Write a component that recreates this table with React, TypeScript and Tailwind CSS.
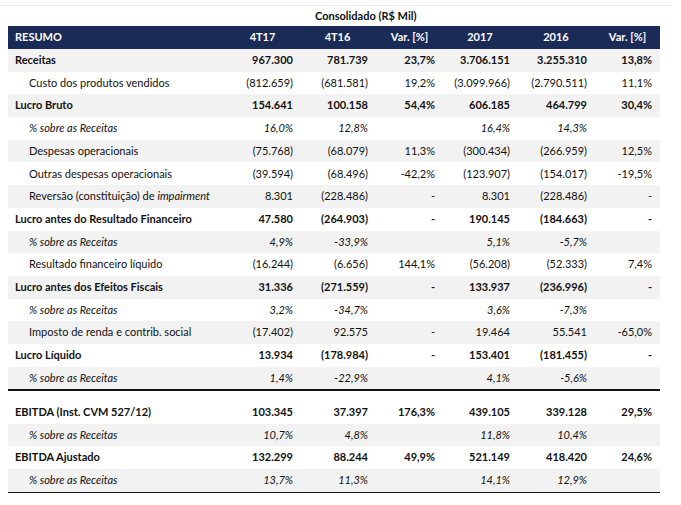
import React from "react";

type Row = {
  label: React.ReactNode;
  vals: string[];
  kind: "bold" | "normal" | "pct";
};

const rows1: Row[] = [
  { label: "Receitas", kind: "bold", vals: ["967.300", "781.739", "23,7%", "3.706.151", "3.255.310", "13,8%"] },
  { label: "Custo dos produtos vendidos", kind: "normal", vals: ["(812.659)", "(681.581)", "19,2%", "(3.099.966)", "(2.790.511)", "11,1%"] },
  { label: "Lucro Bruto", kind: "bold", vals: ["154.641", "100.158", "54,4%", "606.185", "464.799", "30,4%"] },
  { label: "% sobre as Receitas", kind: "pct", vals: ["16,0%", "12,8%", "", "16,4%", "14,3%", ""] },
  { label: "Despesas operacionais", kind: "normal", vals: ["(75.768)", "(68.079)", "11,3%", "(300.434)", "(266.959)", "12,5%"] },
  { label: "Outras despesas operacionais", kind: "normal", vals: ["(39.594)", "(68.496)", "-42,2%", "(123.907)", "(154.017)", "-19,5%"] },
  {
    label: (
      <>
        Reversão (constituição) de <i>impairment</i>
      </>
    ),
    kind: "normal",
    vals: ["8.301", "(228.486)", "-", "8.301", "(228.486)", "-"],
  },
  { label: "Lucro antes do Resultado Financeiro", kind: "bold", vals: ["47.580", "(264.903)", "-", "190.145", "(184.663)", "-"] },
  { label: "% sobre as Receitas", kind: "pct", vals: ["4,9%", "-33,9%", "", "5,1%", "-5,7%", ""] },
  { label: "Resultado financeiro líquido", kind: "normal", vals: ["(16.244)", "(6.656)", "144,1%", "(56.208)", "(52.333)", "7,4%"] },
  { label: "Lucro antes dos Efeitos Fiscais", kind: "bold", vals: ["31.336", "(271.559)", "-", "133.937", "(236.996)", "-"] },
  { label: "% sobre as Receitas", kind: "pct", vals: ["3,2%", "-34,7%", "", "3,6%", "-7,3%", ""] },
  { label: "Imposto de renda e contrib. social", kind: "normal", vals: ["(17.402)", "92.575", "-", "19.464", "55.541", "-65,0%"] },
  { label: "Lucro Líquido", kind: "bold", vals: ["13.934", "(178.984)", "-", "153.401", "(181.455)", "-"] },
  { label: "% sobre as Receitas", kind: "pct", vals: ["1,4%", "-22,9%", "", "4,1%", "-5,6%", ""] },
];

const rows2: Row[] = [
  { label: "EBITDA (Inst. CVM 527/12)", kind: "bold", vals: ["103.345", "37.397", "176,3%", "439.105", "339.128", "29,5%"] },
  { label: "% sobre as Receitas", kind: "pct", vals: ["10,7%", "4,8%", "", "11,8%", "10,4%", ""] },
  { label: "EBITDA Ajustado", kind: "bold", vals: ["132.299", "88.244", "49,9%", "521.149", "418.420", "24,6%"] },
  { label: "% sobre as Receitas", kind: "pct", vals: ["13,7%", "11,3%", "", "14,1%", "12,9%", ""] },
];

const grid = "grid grid-cols-[218px_73px_77px_67px_74px_78px_65px]";
const padR = ["pr-[6px]", "pr-[8px]", "pr-[8px]", "pr-[7px]", "pr-[8px]", "pr-[8px]"];

function DataRow({ row, shaded }: { row: Row; shaded: boolean }) {
  const bold = row.kind === "bold";
  const italic = row.kind === "pct";
  return (
    <div className={`${grid} h-[22.7px] items-center ${shaded ? "bg-[#f2f2f2]" : "bg-white"} ${bold ? "font-bold" : ""} ${italic ? "italic" : ""}`}>
      <div className={`${bold ? "pl-[7px]" : "pl-[21px]"} whitespace-nowrap`}>{row.label}</div>
      {row.vals.map((v, i) => (
        <div key={i} className={`text-right whitespace-nowrap ${padR[i]}`}>
          {v}
        </div>
      ))}
    </div>
  );
}

export default function App() {
  const headers = ["4T17", "4T16", "Var. [%]", "2017", "2016", "Var. [%]"];
  return (
    <div className="w-[681px] h-[505px] bg-white text-[#111] text-[11px] font-['Lato',sans-serif] overflow-hidden">
      <div className="h-[6px] border-b border-[#ececec] w-[672px]" />
      <div className="h-[20px] flex items-center pl-[315px] font-bold text-[11px]">Consolidado (R$ Mil)</div>
      <div className="mx-[8px] w-[652px]">
        <div className={`${grid} h-[23px] items-center bg-[#1b2b57] text-white font-bold`}>
          <div className="pl-[7px]">RESUMO</div>
          {headers.map((h, i) => (
            <div key={i} className="text-center whitespace-nowrap">
              {h}
            </div>
          ))}
        </div>
        {rows1.map((r, i) => (
          <DataRow key={i} row={r} shaded={i % 2 === 0} />
        ))}
        <div className="h-[1.5px] bg-[#111]" />
        <div className="h-[10px]" />
        {rows2.map((r, i) => (
          <DataRow key={i} row={r} shaded={i % 2 === 1} />
        ))}
        <div className="h-[1.5px] bg-[#111]" />
      </div>
    </div>
  );
}
